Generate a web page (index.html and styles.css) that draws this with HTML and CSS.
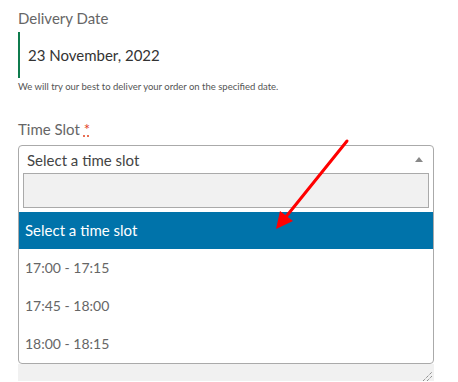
FILE: index.html
```html
<!DOCTYPE html>
<html lang="en">
<head>
    <meta charset="UTF-8">
    <title>Checkout</title>
    <link rel="stylesheet" href="styles.css">
</head>
<body>
<div class="wrapper">
    <p class="field-label">Delivery Date</p>
    <div class="date-value">23 November, 2022</div>
    <p class="field-note">We will try our best to deliver your order on the specified date.</p>

    <p class="field-label slot-label">Time Slot <abbr class="required" title="required">*</abbr></p>
    <div class="select-box">
        <div class="select-head">
            <span>Select a time slot</span>
            <span class="select-arrow"></span>
        </div>
        <div class="select-search"></div>
        <ul class="select-results">
            <li class="highlighted">Select a time slot</li>
            <li>17:00 - 17:15</li>
            <li>17:45 - 18:00</li>
            <li>18:00 - 18:15</li>
        </ul>
    </div>
    <div class="notes-area">
        <svg class="resize-grip" width="10" height="10" viewBox="0 0 10 10">
            <line x1="1" y1="10" x2="10" y2="1" stroke="#666" stroke-width="1" stroke-dasharray="1 1"/>
            <line x1="5" y1="10" x2="10" y2="5" stroke="#666" stroke-width="1" stroke-dasharray="1 1"/>
        </svg>
    </div>
</div>

<svg class="pointer" width="458" height="382" viewBox="0 0 458 382">
    <line x1="347" y1="141" x2="285" y2="218" stroke="#ff0000" stroke-width="3" stroke-linecap="round"/>
    <polygon points="276,229 280,211 293,221" fill="#ff0000"/>
</svg>
</body>
</html>
```

FILE: styles.css
```css
html, body {
    margin: 0;
    padding: 0;
    background: #ffffff;
}
body {
    font-family: Lato, "Noto Sans", sans-serif;
    color: #444;
}
.wrapper {
    width: 416px;
    padding: 8px 0 0 18px;
}
.field-label {
    margin: 0;
    font-size: 15px;
    line-height: 20px;
    color: #666;
}
.date-value {
    margin-top: 4px;
    height: 46px;
    border-left: 2px solid #0f7b4d;
    padding-left: 8px;
    font-size: 15px;
    line-height: 46px;
    color: #333;
}
.field-note {
    margin: 2px 0 0 0;
    font-size: 9.5px;
    line-height: 14px;
    color: #555;
}
.slot-label {
    margin-top: 25px;
}
.required {
    color: #e2401c;
    text-decoration: underline dotted;
    border: none;
}
.select-box {
    margin-top: 6px;
    border: 1px solid #aaa;
    border-radius: 4px;
}
.select-head {
    display: flex;
    justify-content: space-between;
    align-items: center;
    height: 27px;
    padding: 0 8px 0 8px;
    font-size: 15px;
}
.select-arrow {
    width: 0;
    height: 0;
    border-left: 4px solid transparent;
    border-right: 4px solid transparent;
    border-bottom: 5px solid #888;
    margin-right: 2px;
}
.select-search {
    margin: 0 4px;
    height: 33px;
    border: 1px solid #aaa;
    background: #f1f1f1;
}
.select-results {
    list-style: none;
    margin: 4px 0 0 0;
    padding: 0;
}
.select-results li {
    height: 38px;
    line-height: 38px;
    padding-left: 6px;
    font-size: 14px;
    color: #666;
}
.select-results li.highlighted {
    height: 37px;
    line-height: 37px;
    background: #0073aa;
    color: #fff;
    font-size: 15px;
}
.notes-area {
    height: 17px;
    background: #f1f1f1;
    display: flex;
    justify-content: flex-end;
    align-items: flex-end;
    padding-right: 2px;
}
.resize-grip {
    display: block;
}
.pointer {
    position: absolute;
    left: 0;
    top: 0;
}
```
